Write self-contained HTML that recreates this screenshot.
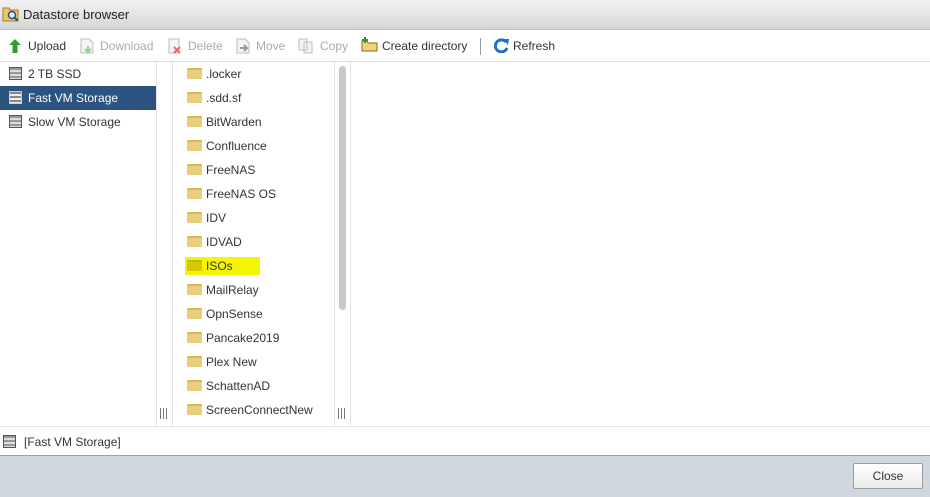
<!DOCTYPE html>
<html><head><style>
*{margin:0;padding:0;box-sizing:border-box}
body{width:930px;height:497px;overflow:hidden;background:#fff;font-family:"Liberation Sans",Arial,sans-serif;font-size:12px;color:#333;position:relative}
.a{position:absolute}
.title{left:0;top:0;width:930px;height:30px;background:linear-gradient(#f2f2f2,#d6d6d6);border-bottom:1px solid #c4c4c4}
.tb{left:0;top:31px;width:930px;height:31px;border-bottom:1px solid #ddd;background:#fff}
.tbi{position:absolute;top:8px;font-size:12px;white-space:nowrap}
.dis{color:#aaa}
.row{position:absolute;height:24px;line-height:24px;white-space:nowrap}
.disk{display:inline-block;width:13px;height:13px;vertical-align:-2px;margin-right:6px;border:1px solid #555;background:repeating-linear-gradient(#999 0 2px,#ddd 2px 4px)}
.fold{position:absolute;left:187px;width:15px;height:11px;background:#e8cf7e;border-radius:1px;border-top:2px solid #d8b850}
.ft{position:absolute;left:206px;height:24px;line-height:24px}
.grip{position:absolute;width:7px;height:11px;border-left:1px solid #777;border-right:1px solid #777}
.grip:after{content:"";position:absolute;left:2px;top:0;width:1px;height:11px;background:#777}
</style></head><body>
<div class="a title"></div>
<svg class="a" style="left:2px;top:5px" width="18" height="18" viewBox="0 0 18 18"><path d="M1 3h6l1 2h8v11H1z" fill="#e9c86a" stroke="#a87c20"/><circle cx="10" cy="10" r="3.5" fill="#dfe9f5" stroke="#2a4f80" stroke-width="1.5"/><path d="M12.5 12.5l3 3" stroke="#2a4f80" stroke-width="2"/></svg>
<div class="a" style="left:23px;top:7px;font-size:13px;color:#222">Datastore browser</div>
<div class="a tb">
<svg style="position:absolute;left:9px;top:8px" width="12" height="14"><path d="M6 0L12 6H8.5V14H3.5V6H0z" fill="#2e9e2e"/></svg>
<span class="tbi" style="left:28px">Upload</span>
<svg style="position:absolute;left:80px;top:7px" width="14" height="16"><path d="M1 1h8l4 4v10H1z" fill="#f4f4f4" stroke="#bbb"/><path d="M8 8v6M5 11l3 3 3-3" stroke="#9c9" stroke-width="2" fill="none"/></svg>
<span class="tbi dis" style="left:100px">Download</span>
<svg style="position:absolute;left:168px;top:7px" width="14" height="16"><path d="M1 1h10v14H1z" fill="#f4f4f4" stroke="#bbb"/><path d="M6 9l6 6M12 9l-6 6" stroke="#e66" stroke-width="2"/></svg>
<span class="tbi dis" style="left:188px">Delete</span>
<svg style="position:absolute;left:236px;top:7px" width="14" height="16"><path d="M1 1h8l4 4v10H1z" fill="#f4f4f4" stroke="#bbb"/><path d="M4 10h6M8 7l3 3-3 3" stroke="#999" stroke-width="2" fill="none"/></svg>
<span class="tbi dis" style="left:256px">Move</span>
<svg style="position:absolute;left:298px;top:7px" width="16" height="16"><path d="M1 1h8v11H1zM6 4h8v11H6z" fill="#f4f4f4" stroke="#bbb"/></svg>
<span class="tbi dis" style="left:320px">Copy</span>
<svg style="position:absolute;left:361px;top:6px" width="17" height="15"><path d="M1 4h5l1 2h9v8H1z" fill="#f2d47a" stroke="#8a6a10"/><path d="M4 0v6M1 3h6" stroke="#2a9a2a" stroke-width="2"/></svg>
<span class="tbi" style="left:382px">Create directory</span>
<div style="position:absolute;left:480px;top:7px;width:1px;height:17px;background:#999"></div>
<svg style="position:absolute;left:494px;top:7px" width="15" height="15"><path d="M12 4A6 6 0 1 0 13 10" stroke="#1f6fd0" stroke-width="3" fill="none"/><path d="M9 1l6 0-1 6z" fill="#1f6fd0"/></svg>
<span class="tbi" style="left:513px">Refresh</span>
</div>
<!-- panels -->
<div class="a" style="left:156px;top:62px;width:1px;height:364px;background:#e4e4e4"></div>
<div class="a" style="left:172px;top:62px;width:1px;height:364px;background:#e4e4e4"></div>
<div class="a" style="left:334px;top:62px;width:1px;height:364px;background:#e4e4e4"></div>
<div class="a" style="left:350px;top:62px;width:1px;height:364px;background:#e4e4e4"></div>
<div class="a" style="left:0;top:426px;width:930px;height:1px;background:#e4e4e4"></div>
<div class="grip" style="left:160px;top:408px"></div>
<div class="grip" style="left:338px;top:408px"></div>
<div class="a" style="left:339px;top:66px;width:7px;height:244px;background:#c8c8c8;border-radius:4px"></div>
<div class="row" style="left:9px;top:62px"><span class="disk"></span>2 TB SSD</div>
<div class="row" style="left:0;top:86px;width:156px;background:#2d5480;color:#fff;padding-left:9px"><span class="disk" style="border-color:#ccc;background:repeating-linear-gradient(#888 0 2px,#eee 2px 4px)"></span>Fast VM Storage</div>
<div class="row" style="left:9px;top:110px"><span class="disk"></span>Slow VM Storage</div>
<div class="a" style="left:185px;top:257px;width:75px;height:18px;background:#f5f500"></div>
<div class="fold" style="top:68px"></div><div class="ft" style="top:62px">.locker</div>
<div class="fold" style="top:92px"></div><div class="ft" style="top:86px">.sdd.sf</div>
<div class="fold" style="top:116px"></div><div class="ft" style="top:110px">BitWarden</div>
<div class="fold" style="top:140px"></div><div class="ft" style="top:134px">Confluence</div>
<div class="fold" style="top:164px"></div><div class="ft" style="top:158px">FreeNAS</div>
<div class="fold" style="top:188px"></div><div class="ft" style="top:182px">FreeNAS OS</div>
<div class="fold" style="top:212px"></div><div class="ft" style="top:206px">IDV</div>
<div class="fold" style="top:236px"></div><div class="ft" style="top:230px">IDVAD</div>
<div class="fold" style="top:260px;background:#d8c800;border-top-color:#c8b800"></div><div class="ft" style="top:254px">ISOs</div>
<div class="fold" style="top:284px"></div><div class="ft" style="top:278px">MailRelay</div>
<div class="fold" style="top:308px"></div><div class="ft" style="top:302px">OpnSense</div>
<div class="fold" style="top:332px"></div><div class="ft" style="top:326px">Pancake2019</div>
<div class="fold" style="top:356px"></div><div class="ft" style="top:350px">Plex New</div>
<div class="fold" style="top:380px"></div><div class="ft" style="top:374px">SchattenAD</div>
<div class="fold" style="top:404px"></div><div class="ft" style="top:398px">ScreenConnectNew</div>
<div class="row" style="left:3px;top:430px"><span class="disk" style="margin-right:8px"></span>[Fast VM Storage]</div>
<div class="a" style="left:0;top:455px;width:930px;height:42px;background:#d1d7df;border-top:1px solid #a0a0a0"></div>
<div class="a" style="left:853px;top:463px;width:70px;height:26px;background:linear-gradient(#fff,#ececec);border:1px solid #9a9a9a;border-radius:2px;text-align:center;line-height:24px;color:#333">Close</div>
</body></html>
